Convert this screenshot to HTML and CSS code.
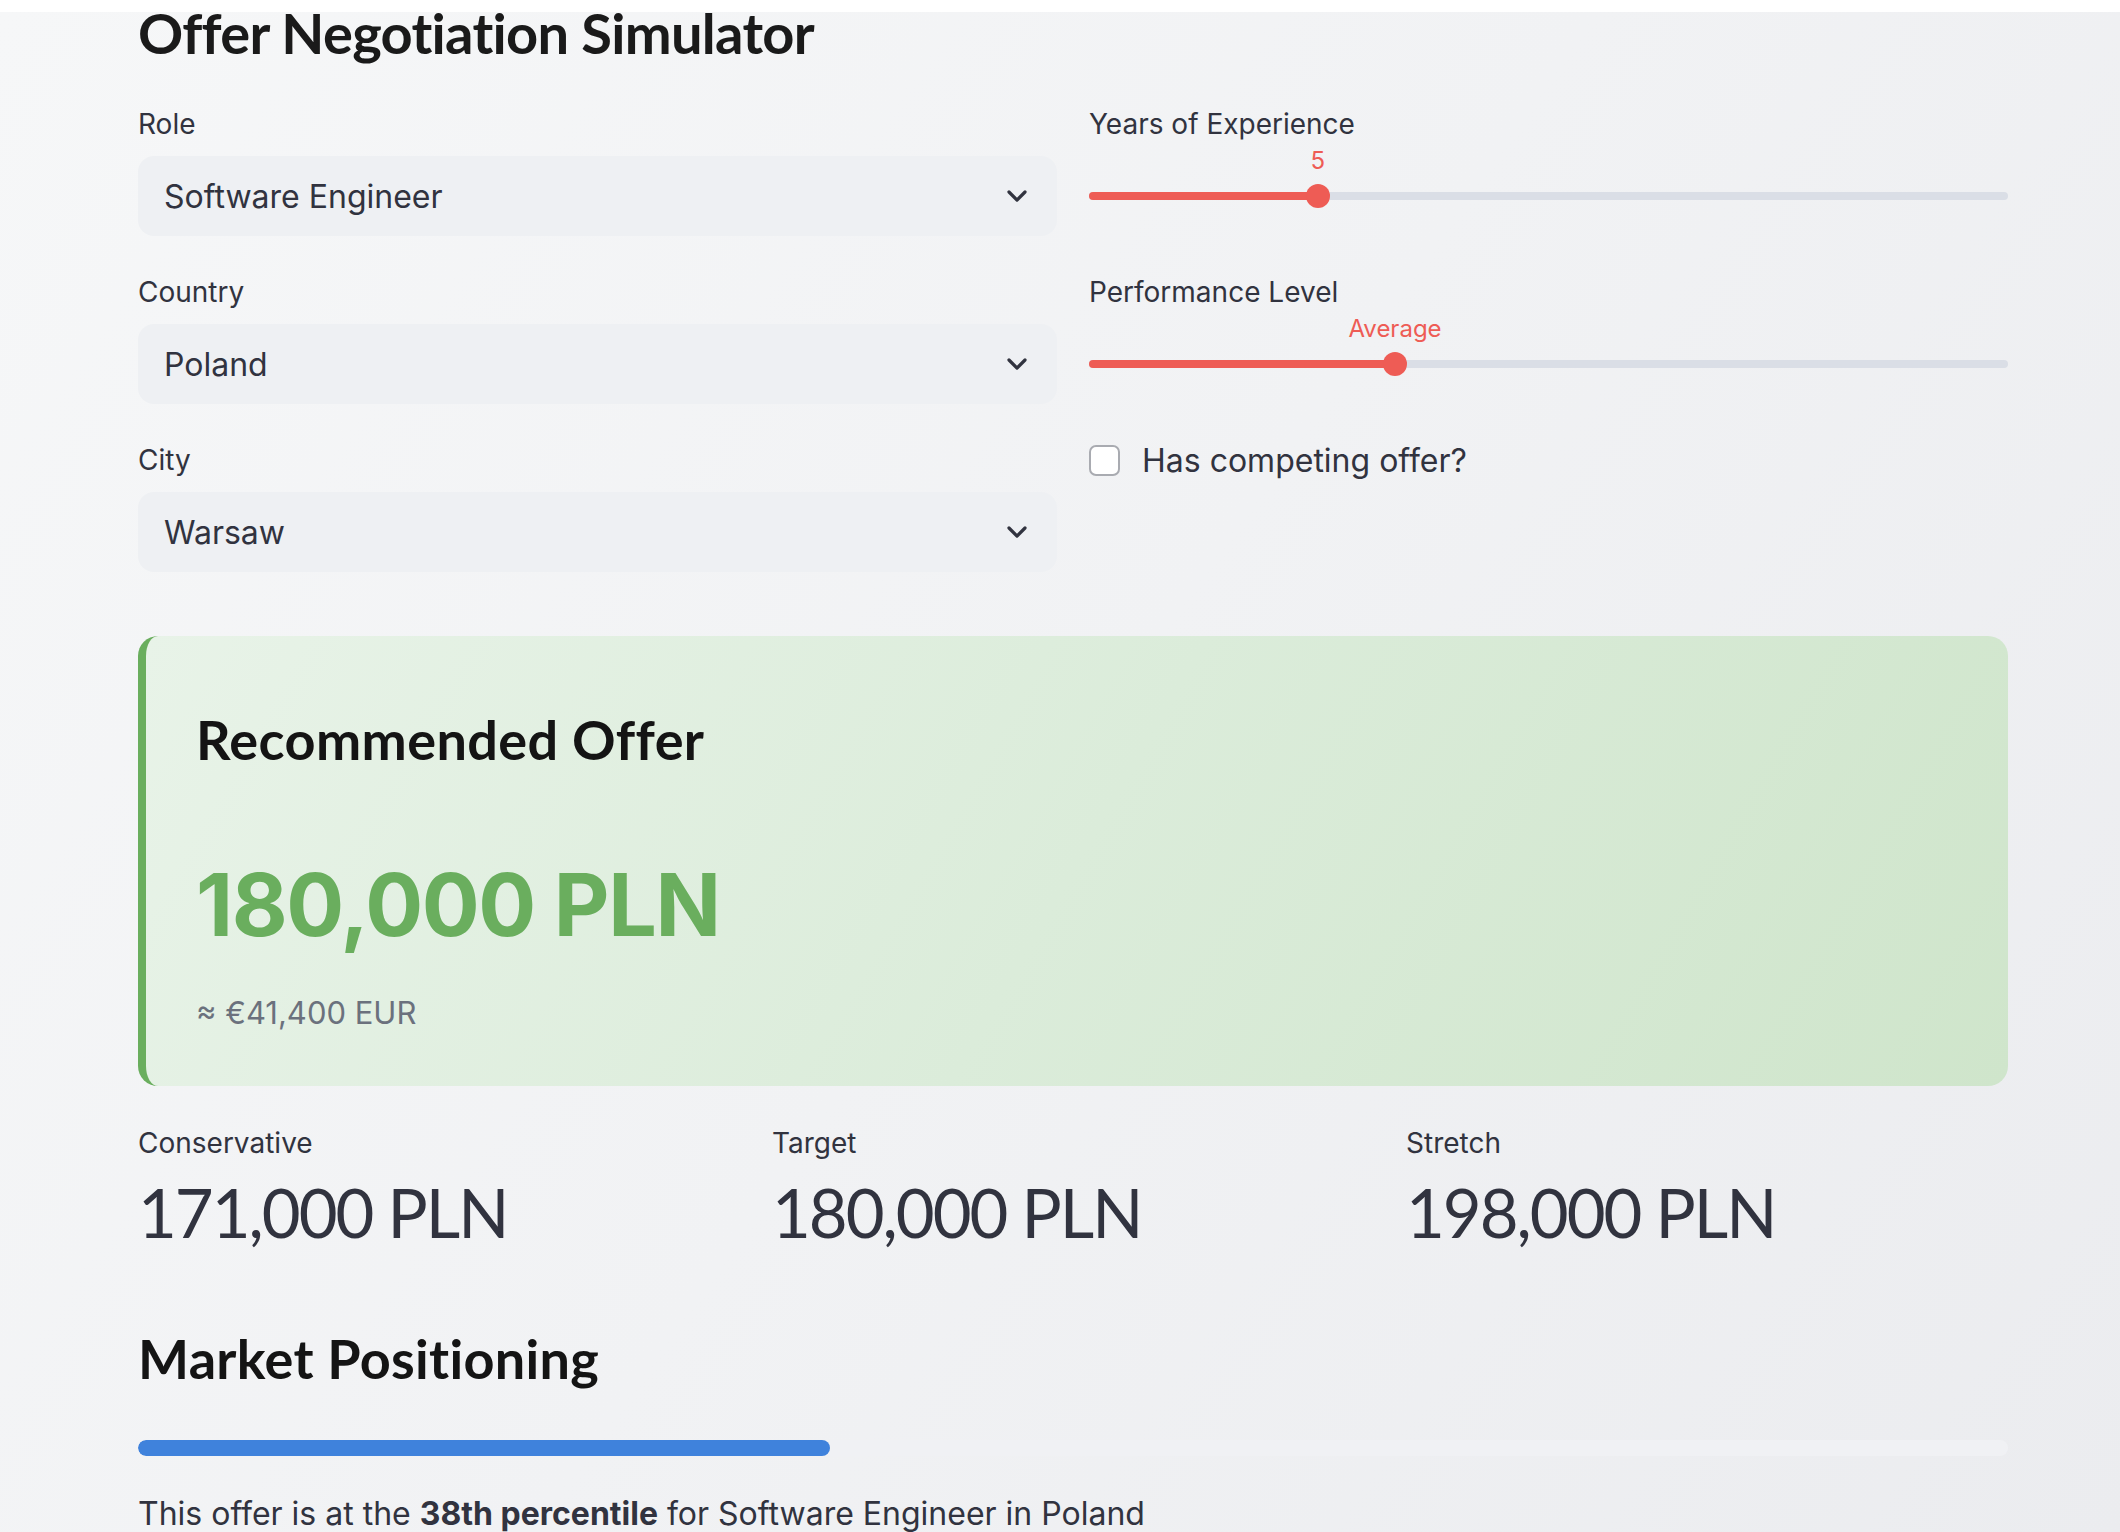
FILE: index.html
```html
<!DOCTYPE html>
<html lang="en">
<head>
<meta charset="utf-8">
<title>Offer Negotiation Simulator</title>
<link rel="stylesheet" href="styles.css">
</head>
<body>
<div class="topbar"></div>
<main class="main">
  <h1 class="title">Offer Negotiation Simulator</h1>

  <section class="inputs">
    <div class="col">
      <div class="widget">
        <div class="label">Role</div>
        <div class="select"><span>Software Engineer</span>
          <svg class="chev" viewBox="0 0 20 12" width="20" height="12"><path d="M2 2 L10 10 L18 2" fill="none" stroke="#31333f" stroke-width="3.2" stroke-linecap="round" stroke-linejoin="round"/></svg>
        </div>
      </div>
      <div class="widget">
        <div class="label">Country</div>
        <div class="select"><span>Poland</span>
          <svg class="chev" viewBox="0 0 20 12" width="20" height="12"><path d="M2 2 L10 10 L18 2" fill="none" stroke="#31333f" stroke-width="3.2" stroke-linecap="round" stroke-linejoin="round"/></svg>
        </div>
      </div>
      <div class="widget">
        <div class="label">City</div>
        <div class="select"><span>Warsaw</span>
          <svg class="chev" viewBox="0 0 20 12" width="20" height="12"><path d="M2 2 L10 10 L18 2" fill="none" stroke="#31333f" stroke-width="3.2" stroke-linecap="round" stroke-linejoin="round"/></svg>
        </div>
      </div>
    </div>
    <div class="col">
      <div class="widget">
        <div class="label">Years of Experience</div>
        <div class="slider">
          <div class="track">
            <div class="fill" style="width: 24.9%"></div>
          </div>
          <div class="thumb" style="left: 24.9%"></div>
          <div class="value" style="left: 24.9%">5</div>
        </div>
      </div>
      <div class="widget">
        <div class="label">Performance Level</div>
        <div class="slider">
          <div class="track">
            <div class="fill" style="width: 33.3%"></div>
          </div>
          <div class="thumb" style="left: 33.3%"></div>
          <div class="value" style="left: 33.3%">Average</div>
        </div>
      </div>
      <div class="widget">
        <label class="check"><span class="box"></span><span>Has competing offer?</span></label>
      </div>
    </div>
  </section>

  <section class="card">
    <h3 class="card-title">Recommended Offer</h3>
    <div class="amount">180,000 PLN</div>
    <div class="eur">≈ €41,400 EUR</div>
  </section>

  <section class="metrics">
    <div class="metric">
      <div class="m-label">Conservative</div>
      <div class="m-value">171,000 PLN</div>
    </div>
    <div class="metric">
      <div class="m-label">Target</div>
      <div class="m-value">180,000 PLN</div>
    </div>
    <div class="metric">
      <div class="m-label">Stretch</div>
      <div class="m-value">198,000 PLN</div>
    </div>
  </section>

  <h3 class="section-title">Market Positioning</h3>
  <div class="progress"><div class="progress-fill" style="width: 37%"></div></div>
  <p class="summary">This offer is at the <strong>38th percentile</strong> for Software Engineer in Poland</p>
</main>
</body>
</html>
```

FILE: styles.css
```css
* { box-sizing: border-box; }

html, body {
  margin: 0;
  padding: 0;
  height: 100%;
  overflow: hidden;
}

body {
  background: #ffffff;
  font-family: "Inter", "Liberation Sans", sans-serif;
  color: #31333f;
}

.topbar {
  position: relative;
  z-index: 0;
  height: 12px;
  background: #ffffff;
}

.main {
  display: flow-root;
  background: linear-gradient(125deg, #f6f7f8 0%, #f1f2f4 50%, #ebecef 100%);
  min-height: 1520px;
  padding: 0 112px 0 138px;
}

.title {
  margin: -7px 0 0 0;
  font-family: "Lato", "Liberation Sans", sans-serif;
  font-weight: 700;
  font-size: 56px;
  line-height: 56px;
  letter-spacing: -0.7px;
  font-variant-ligatures: none;
  color: #1a1a1a;
}

.inputs {
  display: grid;
  grid-template-columns: 1fr 1fr;
  column-gap: 32px;
  margin-top: 43px;
}

.col {
  display: flex;
  flex-direction: column;
  gap: 36px;
}

.widget {
  display: flex;
  flex-direction: column;
  gap: 12px;
}

.label {
  font-size: 28px;
  line-height: 40px;
  color: #31333f;
}

.select {
  height: 80px;
  border-radius: 16px;
  background: #eef0f3;
  display: flex;
  align-items: center;
  justify-content: space-between;
  padding: 0 30px 0 26px;
  font-size: 32px;
  color: #31333f;
}

.chev { display: block; }

.slider {
  position: relative;
  height: 80px;
}

.track {
  position: absolute;
  left: 0;
  right: 0;
  top: 36px;
  height: 8px;
  border-radius: 4px;
  background: #dadee6;
}

.fill {
  height: 100%;
  border-radius: 4px;
  background: #ee5c55;
}

.thumb {
  position: absolute;
  top: 28px;
  width: 24px;
  height: 24px;
  margin-left: -12px;
  border-radius: 50%;
  background: #ee5c55;
}

.value {
  position: absolute;
  top: -6px;
  transform: translateX(-50%);
  font-size: 24px;
  line-height: 22px;
  color: #ee5c55;
  white-space: nowrap;
}

.check {
  display: flex;
  align-items: center;
  gap: 22px;
  height: 40px;
  font-size: 32px;
  color: #31333f;
}

.box {
  width: 31px;
  height: 31px;
  border: 2px solid #a9abb1;
  border-radius: 7px;
  background: #ffffff;
  flex: none;
}

.card {
  margin-top: 64px;
  height: 450px;
  border-left: 8px solid #6aae5e;
  border-radius: 20px;
  background: linear-gradient(120deg, #e8f3e8 0%, #dbecda 50%, #cfe5cb 100%);
  padding: 72px 50px 0 50px;
}

.card-title {
  margin: 0;
  font-family: "Lato", "Liberation Sans", sans-serif;
  font-weight: 700;
  font-size: 54px;
  line-height: 64px;
  letter-spacing: 0.4px;
  font-variant-ligatures: none;
  color: #141414;
}

.amount {
  margin-top: 83px;
  font-weight: 700;
  font-size: 86px;
  line-height: 100px;
  color: #6aae5e;
  letter-spacing: -1.4px;
}

.eur {
  margin-top: 36px;
  font-size: 31px;
  line-height: 44px;
  color: #6b717d;
}

.metrics {
  display: grid;
  grid-template-columns: repeat(3, 1fr);
  column-gap: 32px;
  margin-top: 37px;
}

.m-label {
  font-size: 28px;
  line-height: 40px;
  color: #31333f;
}

.m-value {
  margin-top: 9px;
  font-family: "Lato", "Liberation Sans", sans-serif;
  font-weight: 400;
  font-size: 67px;
  line-height: 80px;
  letter-spacing: -2px;
  color: #31333f;
}

.section-title {
  margin: 75px 0 0 0;
  font-family: "Lato", "Liberation Sans", sans-serif;
  font-weight: 700;
  font-size: 54px;
  line-height: 64px;
  letter-spacing: 0.3px;
  font-variant-ligatures: none;
  color: #141414;
}

.progress {
  margin-top: 49px;
  height: 16px;
  border-radius: 8px;
  background: #f0f1f4;
  overflow: hidden;
}

.progress-fill {
  height: 100%;
  border-radius: 8px;
  background: #3f82dc;
}

.summary {
  margin: 34px 0 0 0;
  font-size: 32px;
  line-height: 48px;
  color: #31333f;
}

.summary strong { font-weight: 700; }
```
